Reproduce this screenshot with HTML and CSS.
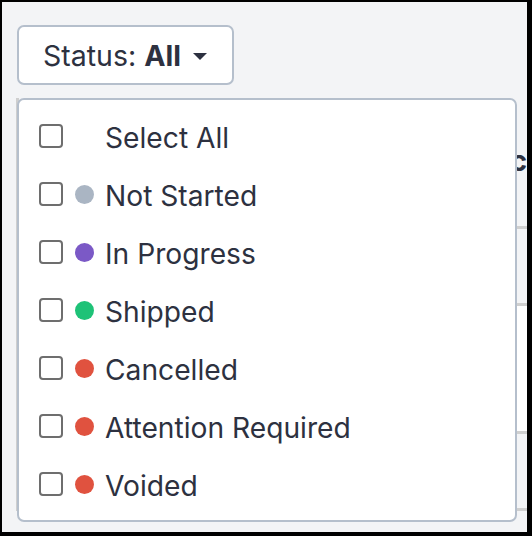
FILE: index.html
```html
<!DOCTYPE html>
<html lang="en">

<head>
    <meta charset="UTF-8" />
    <title>Orders - Status filter</title>
    <link rel="stylesheet" href="styles.css">
</head>

<body>
    <div class="screen">
        <button class="filter-btn">
            <span>Status: <b>All</b></span>
            <span class="caret"></span>
        </button>

        <div class="table">
            <div class="thead"><span class="th">Spec</span></div>
            <div class="row shade"></div>
            <div class="row"></div>
            <div class="row shade"></div>
        </div>

        <div class="menu">
            <label class="opt"><span class="box"></span><span class="dot"></span>Select All</label>
            <label class="opt"><span class="box"></span><span class="dot gray"></span>Not Started</label>
            <label class="opt"><span class="box"></span><span class="dot purple"></span>In Progress</label>
            <label class="opt"><span class="box"></span><span class="dot green"></span>Shipped</label>
            <label class="opt"><span class="box"></span><span class="dot red"></span>Cancelled</label>
            <label class="opt"><span class="box"></span><span class="dot red"></span>Attention Required</label>
            <label class="opt"><span class="box"></span><span class="dot red"></span>Voided</label>
        </div>
    </div>
</body>

</html>
```

FILE: styles.css
```css
body {
    margin: 0;
    background: #000;
    font-family: 'Inter', 'Liberation Sans', sans-serif;
    color: #2d3140;
}
.screen {
    margin: 2px 5px 4px 2px;
    height: 530px;
    background: #f3f4f6;
    position: relative;
    overflow: hidden;
    padding: 23px 0 0 15px;
    box-sizing: border-box;
}
.filter-btn {
    display: flex;
    align-items: center;
    gap: 12px;
    width: 217px;
    height: 60px;
    padding: 0 24px;
    background: #fff;
    border: 2px solid #b5bfcc;
    border-radius: 7px;
    font-family: inherit;
    font-size: 28.5px;
    color: #2d3140;
    box-sizing: border-box;
    white-space: nowrap;
}
.filter-btn b {
    font-weight: 700;
}
.caret {
    width: 0;
    height: 0;
    border-left: 7px solid transparent;
    border-right: 7px solid transparent;
    border-top: 7px solid #2d3140;
    margin-top: 2px;
}
.table {
    margin-top: 13px;
    border-left: 3px solid #cfcfcf;
    margin-left: -1px;
}
.thead {
    height: 128px;
    display: flex;
    align-items: center;
    justify-content: flex-end;
    border-bottom: 3px solid #cfcfcf;
}
.th {
    font-size: 29px;
    font-weight: 700;
    white-space: nowrap;
    margin-top: -4px;
}
.row {
    height: 74px;
    background: #fff;
    border-bottom: 3px solid #cfcfcf;
}
.row:nth-child(3) {
    height: 125px;
}
.row.shade {
    background: #f3f4f6;
}
.menu {
    position: absolute;
    top: 96px;
    left: 15px;
    width: 500px;
    box-sizing: border-box;
    background: #fff;
    border: 2px solid #b5bfcc;
    border-radius: 7px;
    padding: 7px 20px 7px;
}
.opt {
    display: flex;
    align-items: center;
    height: 58px;
    font-size: 28.2px;
    padding-top: 3px;
    box-sizing: border-box;
}
.box {
    width: 24px;
    height: 24px;
    box-sizing: border-box;
    border: 2px solid #6e6e6e;
    border-radius: 4px;
    margin-right: 12px;
    margin-top: -3px;
}
.dot {
    width: 19px;
    height: 19px;
    border-radius: 50%;
    margin-right: 11px;
    margin-top: -2px;
}
.gray { background: #aab5c3; }
.purple { background: #7b59c6; }
.green { background: #1ec277; }
.red { background: #e0523f; }
```
